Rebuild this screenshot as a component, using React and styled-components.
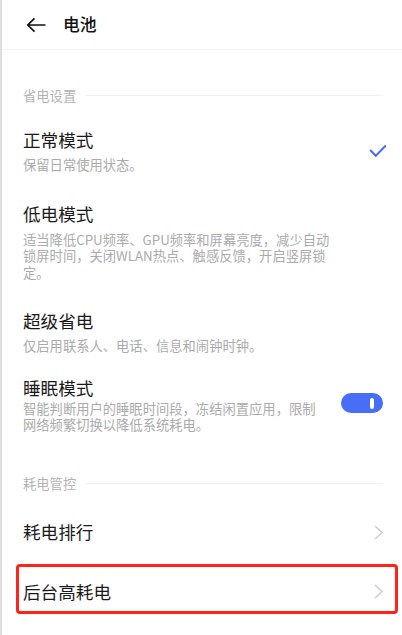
import React from 'react';
import styled, { createGlobalStyle } from 'styled-components';

const GlobalStyle = createGlobalStyle`
  html, body {
    margin: 0;
    padding: 0;
    background: #fff;
    overflow: hidden;
  }
  * {
    box-sizing: border-box;
  }
  body {
    font-family: "Noto Sans CJK SC", "Noto Sans", sans-serif;
  }
`;

const Screen = styled.div`
  width: 402px;
  height: 635px;
  overflow: hidden;
  background: #fff;
  border-left: 2px solid #dedede;
`;

const Header = styled.div`
  display: flex;
  align-items: center;
  height: 50px;
  padding-left: 24px;
  border-bottom: 1px solid #f2f2f2;
`;

const BackButton = styled.svg`
  width: 20px;
  height: 16px;
  flex-shrink: 0;
`;

const HeaderTitle = styled.h1`
  margin: 0 0 1px 17px;
  font-size: 16.8px;
  font-weight: 500;
  color: #111;
  line-height: 24px;
`;

const Section = styled.div`
  display: flex;
  align-items: center;
  gap: 10px;
  height: 18px;
  margin-top: ${p => p.top}px;
  padding: 0 19px 0 21px;
  font-size: 13.3px;
  line-height: 18px;
  color: #b3b3b3;
`;

const SectionLine = styled.div`
  flex: 1;
  height: 1px;
  margin-top: -1px;
  background: #f1f1f1;
`;

const Row = styled.div`
  position: relative;
  display: flex;
  align-items: center;
  justify-content: space-between;
  padding: ${p => p.pt}px 19px ${p => p.pb}px 21px;

  ${p => p.marked && `
    &::after {
      content: '';
      position: absolute;
      left: 14px;
      right: 4px;
      top: 0;
      bottom: 0;
      border: 3px solid #ff2419;
      border-radius: 4px;
      pointer-events: none;
    }
  `}
`;

const TextBlock = styled.div`
  max-width: ${p => p.wrap || 340}px;
`;

const Title = styled.div`
  font-size: 17.6px;
  line-height: 24px;
  color: #1a1a1a;
  margin-bottom: ${p => p.gap || 0}px;
`;

const Desc = styled.div`
  font-size: 13.3px;
  line-height: 16.5px;
  color: #ababab;
`;

const Check = styled.svg`
  width: 18px;
  height: 14px;
  margin-right: -4px;
  flex-shrink: 0;
`;

const Toggle = styled.div`
  display: flex;
  align-items: center;
  justify-content: flex-end;
  width: 42px;
  height: 20px;
  padding-right: 9px;
  border-radius: 10px;
  background: #476ef5;
  flex-shrink: 0;
  margin-top: -3px;
`;

const Knob = styled.div`
  width: 4px;
  height: 11px;
  border-radius: 2px;
  background: #fff;
`;

const Chevron = styled.svg`
  width: 9px;
  height: 15px;
  flex-shrink: 0;
`;

const ArrowRight = () => (
  <Chevron viewBox="0 0 9 15">
    <polyline points="1,1 8,7.5 1,14" fill="none" stroke="#c9c9c9" strokeWidth="1.3" />
  </Chevron>
);

export default function App() {
  return (
    <Screen>
      <GlobalStyle />
      <Header>
        <BackButton viewBox="0 0 20 16">
          <path d="M19.5 8H2 M8.5 1.3L1.8 8L8.5 14.7" fill="none" stroke="#111" strokeWidth="1.7" />
        </BackButton>
        <HeaderTitle>电池</HeaderTitle>
      </Header>

      <Section top={37}>
        省电设置
        <SectionLine />
      </Section>

      <Row pt={23} pb={14}>
        <TextBlock>
          <Title gap={5}>正常模式</Title>
          <Desc>保留日常使用状态。</Desc>
        </TextBlock>
        <Check viewBox="0 0 18 14">
          <polyline points="1.2,6 6.8,11.8 16.8,1.5" fill="none" stroke="#476ef5" strokeWidth="2" />
        </Check>
      </Row>

      <Row pt={14.5} pb={14}>
        <TextBlock wrap={318}>
          <Title gap={5.5}>低电模式</Title>
          <Desc>适当降低CPU频率、GPU频率和屏幕亮度，减少自动锁屏时间，关闭WLAN热点、触感反馈，开启竖屏锁定。</Desc>
        </TextBlock>
      </Row>

      <Row pt={14} pb={11}>
        <TextBlock>
          <Title gap={5}>超级省电</Title>
          <Desc>仅启用联系人、电话、信息和闹钟时钟。</Desc>
        </TextBlock>
      </Row>

      <Row pt={10.5} pb={0}>
        <TextBlock wrap={302}>
          <Title gap={0.5}>睡眠模式</Title>
          <Desc>智能判断用户的睡眠时间段，冻结闲置应用，限制网络频繁切换以降低系统耗电。</Desc>
        </TextBlock>
        <Toggle>
          <Knob />
        </Toggle>
      </Row>

      <Section top={41.5}>
        耗电管控
        <SectionLine />
      </Section>

      <Row pt={27} pb={20}>
        <Title>耗电排行</Title>
        <ArrowRight />
      </Row>

      <Row pt={15.5} pb={10.5} marked>
        <Title>后台高耗电</Title>
        <ArrowRight />
      </Row>
    </Screen>
  );
}
